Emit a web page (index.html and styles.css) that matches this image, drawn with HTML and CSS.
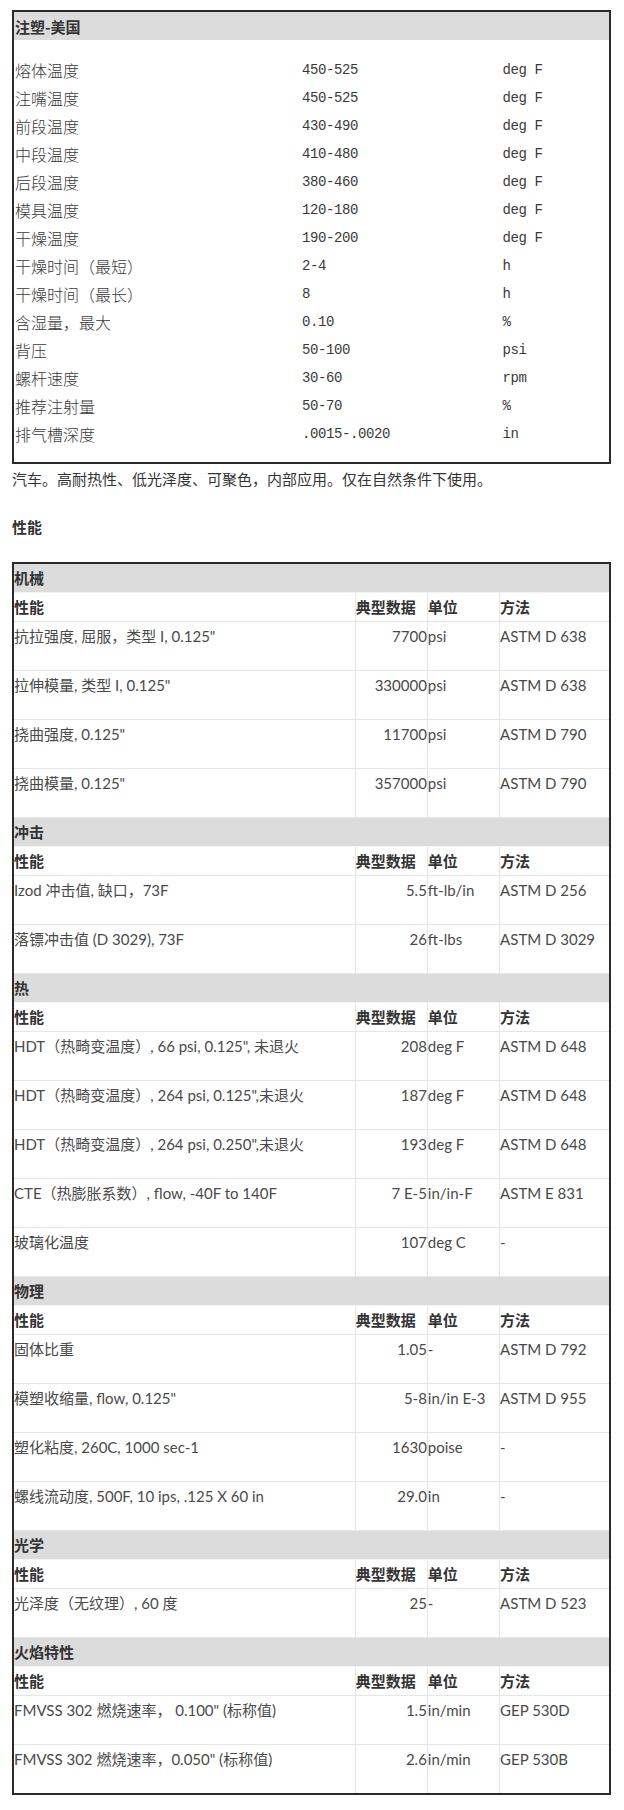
FILE: index.html
```html
<!DOCTYPE html>
<html lang="zh-CN">
<head>
<meta charset="utf-8">
<title>注塑-美国</title>
<link rel="stylesheet" href="styles.css">
</head>
<body>
<div class="page">
  <table class="proc">
    <colgroup>
      <col class="p-name"><col class="p-val"><col class="p-unit">
    </colgroup>
    <thead>
      <tr><th colspan="3" class="proc-title">注塑-美国</th></tr>
    </thead>
    <tbody>
      <tr class="gap-top"><td colspan="3"></td></tr>
      <tr><td class="c1">熔体温度</td><td class="c2">450-525</td><td class="c3">deg F</td></tr>
      <tr><td class="c1">注嘴温度</td><td class="c2">450-525</td><td class="c3">deg F</td></tr>
      <tr><td class="c1">前段温度</td><td class="c2">430-490</td><td class="c3">deg F</td></tr>
      <tr><td class="c1">中段温度</td><td class="c2">410-480</td><td class="c3">deg F</td></tr>
      <tr><td class="c1">后段温度</td><td class="c2">380-460</td><td class="c3">deg F</td></tr>
      <tr><td class="c1">模具温度</td><td class="c2">120-180</td><td class="c3">deg F</td></tr>
      <tr><td class="c1">干燥温度</td><td class="c2">190-200</td><td class="c3">deg F</td></tr>
      <tr><td class="c1">干燥时间（最短）</td><td class="c2">2-4</td><td class="c3">h</td></tr>
      <tr><td class="c1">干燥时间（最长）</td><td class="c2">8</td><td class="c3">h</td></tr>
      <tr><td class="c1">含湿量，最大</td><td class="c2">0.10</td><td class="c3">%</td></tr>
      <tr><td class="c1">背压</td><td class="c2">50-100</td><td class="c3">psi</td></tr>
      <tr><td class="c1">螺杆速度</td><td class="c2">30-60</td><td class="c3">rpm</td></tr>
      <tr><td class="c1">推荐注射量</td><td class="c2">50-70</td><td class="c3">%</td></tr>
      <tr><td class="c1">排气槽深度</td><td class="c2">.0015-.0020</td><td class="c3">in</td></tr>
      <tr class="gap-bottom"><td colspan="3"></td></tr>
    </tbody>
  </table>

  <p class="note">汽车。高耐热性、低光泽度、可聚色，内部应用。仅在自然条件下使用。</p>

  <h2 class="section-title">性能</h2>

  <table class="props">
    <colgroup>
      <col class="w-name"><col class="w-val"><col class="w-unit"><col class="w-method">
    </colgroup>
    <tbody>
      <tr class="group"><th colspan="4">机械</th></tr>
      <tr class="head"><th>性能</th><th>典型数据</th><th>单位</th><th>方法</th></tr>
      <tr><td>抗拉强度, 屈服，类型 I, 0.125"</td><td class="num">7700</td><td>psi</td><td>ASTM D 638</td></tr>
      <tr><td>拉伸模量, 类型 I, 0.125"</td><td class="num">330000</td><td>psi</td><td>ASTM D 638</td></tr>
      <tr><td>挠曲强度, 0.125"</td><td class="num">11700</td><td>psi</td><td>ASTM D 790</td></tr>
      <tr><td>挠曲模量, 0.125"</td><td class="num">357000</td><td>psi</td><td>ASTM D 790</td></tr>

      <tr class="group"><th colspan="4">冲击</th></tr>
      <tr class="head"><th>性能</th><th>典型数据</th><th>单位</th><th>方法</th></tr>
      <tr><td>Izod 冲击值, 缺口，73F</td><td class="num">5.5</td><td>ft-lb/in</td><td>ASTM D 256</td></tr>
      <tr><td>落镖冲击值 (D 3029), 73F</td><td class="num">26</td><td>ft-lbs</td><td>ASTM D 3029</td></tr>

      <tr class="group"><th colspan="4">热</th></tr>
      <tr class="head"><th>性能</th><th>典型数据</th><th>单位</th><th>方法</th></tr>
      <tr><td>HDT（热畸变温度）, 66 psi, 0.125", 未退火</td><td class="num">208</td><td>deg F</td><td>ASTM D 648</td></tr>
      <tr><td>HDT（热畸变温度）, 264 psi, 0.125",未退火</td><td class="num">187</td><td>deg F</td><td>ASTM D 648</td></tr>
      <tr><td>HDT（热畸变温度）, 264 psi, 0.250",未退火</td><td class="num">193</td><td>deg F</td><td>ASTM D 648</td></tr>
      <tr><td>CTE（热膨胀系数）, flow, -40F to 140F</td><td class="num">7 E-5</td><td>in/in-F</td><td>ASTM E 831</td></tr>
      <tr><td>玻璃化温度</td><td class="num">107</td><td>deg C</td><td>-</td></tr>

      <tr class="group"><th colspan="4">物理</th></tr>
      <tr class="head"><th>性能</th><th>典型数据</th><th>单位</th><th>方法</th></tr>
      <tr><td>固体比重</td><td class="num">1.05</td><td>-</td><td>ASTM D 792</td></tr>
      <tr><td>模塑收缩量, flow, 0.125"</td><td class="num">5-8</td><td>in/in E-3</td><td>ASTM D 955</td></tr>
      <tr><td>塑化粘度, 260C, 1000 sec-1</td><td class="num">1630</td><td>poise</td><td>-</td></tr>
      <tr><td>螺线流动度, 500F, 10 ips, .125 X 60 in</td><td class="num">29.0</td><td>in</td><td>-</td></tr>

      <tr class="group"><th colspan="4">光学</th></tr>
      <tr class="head"><th>性能</th><th>典型数据</th><th>单位</th><th>方法</th></tr>
      <tr><td>光泽度（无纹理）, 60 度</td><td class="num">25</td><td>-</td><td>ASTM D 523</td></tr>

      <tr class="group"><th colspan="4">火焰特性</th></tr>
      <tr class="head"><th>性能</th><th>典型数据</th><th>单位</th><th>方法</th></tr>
      <tr><td>FMVSS 302 燃烧速率， 0.100" (标称值)</td><td class="num">1.5</td><td>in/min</td><td>GEP 530D</td></tr>
      <tr><td>FMVSS 302 燃烧速率，0.050" (标称值)</td><td class="num">2.6</td><td>in/min</td><td>GEP 530B</td></tr>
    </tbody>
  </table>
</div>
</body>
</html>
```

FILE: styles.css
```css
html, body {
  margin: 0;
  padding: 0;
  background: #ffffff;
}

.page {
  padding: 10px 13px 0 12px;
  font-family: "Lato", "Noto Sans CJK SC", sans-serif;
  color: #333333;
}

/* ---------- processing table ---------- */
.proc {
  width: 599px;
  border: 2px solid #2a2a2a;
  border-collapse: collapse;
  table-layout: fixed;
}

.p-name { width: 288px; }
.p-val { width: 200px; }
.p-unit { width: 107px; }

.proc-title {
  background: #dcdcdc;
  height: 28px;
  padding: 0 0 0 1px;
  text-align: left;
  font-family: "Noto Sans CJK SC", sans-serif;
  font-size: 15px;
  font-weight: 700;
  color: #333333;
}

.proc td {
  height: 28px;
  padding: 0;
  font-size: 16px;
  line-height: 28px;
  color: #3a3a3a;
  white-space: nowrap;
}

.proc .gap-top td {
  height: 16px;
}

.proc .gap-bottom td {
  height: 14px;
}

.proc .c1 {
  padding-left: 1px;
  font-family: "Noto Sans CJK SC", sans-serif;
  font-weight: 300;
}

.proc .c2,
.proc .c3 {
  font-family: "Liberation Mono", "Noto Sans CJK SC", monospace;
  font-size: 14px;
  letter-spacing: -0.4px;
}

/* ---------- notes ---------- */
.note {
  margin: 4px 0 0 0;
  font-family: "Noto Sans CJK SC", sans-serif;
  font-size: 15px;
  line-height: 22px;
  color: #333333;
}

.section-title {
  margin: 26px 0 24px 0;
  font-family: "Noto Sans CJK SC", sans-serif;
  font-size: 15px;
  line-height: 22px;
  font-weight: 700;
  color: #333333;
}

/* ---------- properties table ---------- */
.props {
  width: 599px;
  border: 2px solid #2a2a2a;
  border-collapse: collapse;
  table-layout: fixed;
  font-size: 15px;
}

.w-name { width: 341px; }
.w-val { width: 72px; }
.w-unit { width: 72px; }
.w-method { width: 110px; }

.props th,
.props td {
  padding: 0;
  text-align: left;
  white-space: nowrap;
  overflow: visible;
}

.props .group th {
  background: #dcdcdc;
  height: 28px;
  line-height: 28px;
  font-family: "Noto Sans CJK SC", sans-serif;
  font-weight: 700;
  color: #333333;
  border-bottom: 1px solid #f4f4f4;
}

.props .head th {
  height: 28px;
  line-height: 28px;
  font-family: "Noto Sans CJK SC", sans-serif;
  font-weight: 700;
  color: #333333;
  border-left: 1px solid #e6e6e6;
  border-bottom: 1px solid #e6e6e6;
}

.props td {
  height: 48px;
  line-height: 28px;
  vertical-align: top;
  color: #4a4a4a;
  border-left: 1px solid #e6e6e6;
  border-bottom: 1px solid #e6e6e6;
}

.props .head th:first-child,
.props td:first-child {
  border-left: none;
}

.props td.num {
  text-align: right;
}
```
